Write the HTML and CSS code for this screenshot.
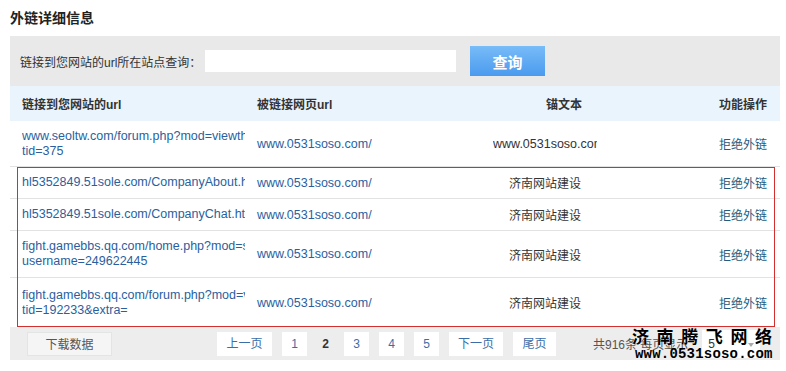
FILE: index.html
```html
<!DOCTYPE html>
<html lang="zh-CN">
<head>
<meta charset="utf-8">
<title>外链详细信息</title>
<link rel="stylesheet" href="styles.css">
</head>
<body>
<div class="page">
  <h2 class="title">外链详细信息</h2>
  <div class="search">
    <label class="search-label">链接到您网站的url所在站点查询：</label>
    <input class="search-input" type="text">
    <button class="search-btn">查询</button>
  </div>
  <div class="table">
    <div class="row head">
      <div class="c1">链接到您网站的url</div>
      <div class="c2">被链接网页url</div>
      <div class="c3 h3">锚文本</div>
      <div class="c4">功能操作</div>
    </div>
    <div class="row r-a">
      <div class="c1 link"><span class="ln">www.seoltw.com/forum.php?mod=viewthread&amp;</span><span class="ln">tid=375</span></div>
      <div class="c2 link">www.0531soso.com/</div>
      <div class="c3 lat">www.0531soso.com</div>
      <div class="c4 act">拒绝外链</div>
    </div>
    <div class="row r-b">
      <div class="c1 link"><span class="ln">hl5352849.51sole.com/CompanyAbout.html</span></div>
      <div class="c2 link">www.0531soso.com/</div>
      <div class="c3">济南网站建设</div>
      <div class="c4 act">拒绝外链</div>
    </div>
    <div class="row r-b">
      <div class="c1 link"><span class="ln">hl5352849.51sole.com/CompanyChat.html</span></div>
      <div class="c2 link">www.0531soso.com/</div>
      <div class="c3">济南网站建设</div>
      <div class="c4 act">拒绝外链</div>
    </div>
    <div class="row r-c">
      <div class="c1 link"><span class="ln">fight.gamebbs.qq.com/home.php?mod=space&amp;</span><span class="ln">username=249622445</span></div>
      <div class="c2 link">www.0531soso.com/</div>
      <div class="c3">济南网站建设</div>
      <div class="c4 act">拒绝外链</div>
    </div>
    <div class="row r-d">
      <div class="c1 link"><span class="ln">fight.gamebbs.qq.com/forum.php?mod=viewthread&amp;</span><span class="ln">tid=192233&amp;extra=</span></div>
      <div class="c2 link">www.0531soso.com/</div>
      <div class="c3">济南网站建设</div>
      <div class="c4 act">拒绝外链</div>
    </div>
    <div class="mark-box"></div>
  </div>
  <div class="footer">
    <button class="dl-btn">下载数据</button>
    <div class="pager">
      <a class="pg wide">上一页</a>
      <a class="pg">1</a>
      <span class="pg cur">2</span>
      <a class="pg">3</a>
      <a class="pg">4</a>
      <a class="pg">5</a>
      <a class="pg wide2">下一页</a>
      <a class="pg wide3">尾页</a>
    </div>
    <span class="total">共916条 每页显示</span>
    <div class="sel"><span>5</span><span class="arrow"></span></div>
    <div class="watermark">
      <div class="wm1">济南腾飞网络</div>
      <div class="wm2">www.0531soso.com</div>
    </div>
  </div>
</div>
</body>
</html>
```
FILE: styles.css
```css
* { box-sizing: border-box; }
html, body { margin: 0; padding: 0; background: #fff; }
body {
  font-family: "Liberation Sans", "Noto Sans CJK SC", sans-serif;
  font-size: 12px;
  color: #333;
}
.page {
  width: 786px;
  padding: 0 6px 0 10px;
  position: relative;
}
.title {
  margin: 0;
  padding-top: 8px;
  height: 36px;
  line-height: 20px;
  font-size: 14px;
  font-weight: bold;
  color: #222;
}
.search {
  height: 50px;
  background: #e9e9e9;
  display: flex;
  align-items: center;
  padding-left: 10px;
}
.search-label {
  width: 185px;
  color: #333;
  white-space: nowrap;
}
.search-input {
  width: 251px;
  height: 22px;
  border: none;
  background: #fff;
  margin: 0;
  padding: 0;
}
.search-btn {
  margin-left: 14px;
  width: 75px;
  height: 30px;
  border: none;
  background: linear-gradient(#78bcf8, #4a9aee);
  color: #fff;
  font-family: "Noto Sans CJK SC", sans-serif;
  font-size: 15px;
  font-weight: bold;
  padding: 0;
}
.table { position: relative; }
.row {
  display: flex;
  align-items: center;
  border-bottom: 1px solid #e2e2e2;
}
.row.head {
  height: 35px;
  background: #eaf4fd;
  border-bottom: none;
  font-weight: bold;
  color: #333;
}
.r-a { height: 46px; }
.r-b { height: 32px; }
.r-c { height: 47px; }
.r-d { height: 49px; border-bottom: none; }
.c1 {
  width: 235px;
  padding-left: 12px;
  overflow: hidden;
  white-space: nowrap;
}
.c2 {
  width: 248px;
  padding-left: 12px;
  white-space: nowrap;
}
.c3 {
  width: 104px;
  text-align: center;
  white-space: nowrap;
  overflow: hidden;
  color: #333;
}
.h3 { padding-left: 38px; overflow: visible; }
.c4 {
  width: 183px;
  text-align: right;
  padding-right: 13px;
}
.link { color: #2a5f9f; font-size: 12.5px; }
.lat { font-size: 12.5px; }
.act { color: #245b80; }
.ln {
  display: block;
  line-height: 15px;
  overflow: hidden;
  white-space: nowrap;
}
.mark-box {
  position: absolute;
  left: 7px;
  top: 81px;
  width: 758px;
  height: 160px;
  border: 1px solid #d2302f;
  pointer-events: none;
}
.footer {
  position: relative;
  height: 33px;
  background: #ededed;
  display: flex;
  align-items: center;
  padding-left: 17px;
}
.dl-btn {
  width: 85px;
  height: 24px;
  background: #f5f5f5;
  border: 1px solid #e4e4e4;
  color: #555;
  font-family: "Noto Sans CJK SC", sans-serif;
  font-size: 12px;
  padding: 0;
}
.pager {
  display: flex;
  gap: 10px;
  margin-left: 105px;
}
.pg {
  width: 25px;
  height: 24px;
  line-height: 24px;
  background: #fff;
  text-align: center;
  color: #3a6ea8;
}
.pg.wide { width: 55px; }
.pg.wide2 { width: 54px; }
.pg.wide3 { width: 43px; }
.pg.cur {
  width: 17px;
  background: transparent;
  font-weight: bold;
  color: #333;
}
.total {
  margin-left: 37px;
  color: #555;
  white-space: nowrap;
}
.sel {
  position: relative;
  margin-left: 14px;
  width: 58px;
  height: 28px;
  background: #fff;
  line-height: 28px;
  padding-left: 6px;
  color: #333;
}
.arrow {
  position: absolute;
  right: 6px;
  top: 13px;
  border-left: 3px solid transparent;
  border-right: 3px solid transparent;
  border-top: 4px solid #aaa;
}
.watermark {
  position: absolute;
  left: 622px;
  top: -1px;
  color: #000;
  font-weight: bold;
  pointer-events: none;
}
.wm1 {
  font-family: "Noto Sans CJK SC", sans-serif;
  font-size: 17px;
  line-height: 20px;
  letter-spacing: 7.6px;
  text-shadow: 0 0 1px #fff;
}
.wm2 {
  font-family: "Liberation Mono", monospace;
  font-size: 14px;
  line-height: 16px;
  margin-left: 3px;
  letter-spacing: 0.2px;
}
```
